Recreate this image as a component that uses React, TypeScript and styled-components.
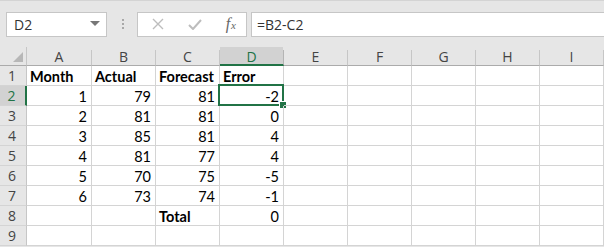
import React from 'react';
import styled, {createGlobalStyle} from 'styled-components';

const GREEN = '#217346';

const GlobalStyle = createGlobalStyle`
    html, body {
        margin: 0;
        padding: 0;
        background: #e6e6e6;
        width: 604px;
        height: 247px;
        overflow: hidden;
    }
`;

const columns = ['A', 'B', 'C', 'D', 'E', 'F', 'G', 'H', 'I'];

type Cell = {v: string; bold?: boolean; right?: boolean};

const data: Cell[][] = [
    [{v: 'Month', bold: true}, {v: 'Actual', bold: true}, {v: 'Forecast', bold: true}, {v: 'Error', bold: true}],
    [{v: '1', right: true}, {v: '79', right: true}, {v: '81', right: true}, {v: '-2', right: true}],
    [{v: '2', right: true}, {v: '81', right: true}, {v: '81', right: true}, {v: '0', right: true}],
    [{v: '3', right: true}, {v: '85', right: true}, {v: '81', right: true}, {v: '4', right: true}],
    [{v: '4', right: true}, {v: '81', right: true}, {v: '77', right: true}, {v: '4', right: true}],
    [{v: '5', right: true}, {v: '70', right: true}, {v: '75', right: true}, {v: '-5', right: true}],
    [{v: '6', right: true}, {v: '73', right: true}, {v: '74', right: true}, {v: '-1', right: true}],
    [{v: ''}, {v: ''}, {v: 'Total', bold: true}, {v: '0', right: true}],
    [],
];

const selCol = 3;
const selRow = 1;

export default function App() {
    return (
        <Page>
            <GlobalStyle />
            <Toolbar>
                <NameBox>
                    <span>D2</span>
                    <Caret />
                </NameBox>
                <Dots>
                    <i />
                    <i />
                    <i />
                </Dots>
                <FxBox>
                    <svg width='12' height='12' viewBox='0 0 12 12'>
                        <path d='M1 1L11 11M11 1L1 11' stroke='#bdbdbd' strokeWidth='1.4' fill='none' />
                    </svg>
                    <svg width='14' height='11' viewBox='0 0 14 11'>
                        <path d='M1 6L5 10L13 1' stroke='#bdbdbd' strokeWidth='2' fill='none' />
                    </svg>
                    <Fx>
                        f<sub>x</sub>
                    </Fx>
                </FxBox>
                <FormulaInput>=B2-C2</FormulaInput>
            </Toolbar>
            <Grid>
                <Corner>
                    <svg width='10' height='10' viewBox='0 0 10 10'>
                        <path d='M10 0L10 10L0 10Z' fill='#b7b7b7' />
                    </svg>
                </Corner>
                {columns.map((c, i) => (
                    <ColHead key={c} selected={i === selCol}>
                        {c}
                    </ColHead>
                ))}
                {Array.from({length: 9}).map((_, r) => (
                    <React.Fragment key={r}>
                        <RowHead selected={r === selRow}>{r + 1}</RowHead>
                        {columns.map((c, ci) => {
                            const cell = data[r][ci];
                            return (
                                <DataCell key={c} bold={cell?.bold} right={cell?.right}>
                                    {cell?.v}
                                    {r === selRow && ci === selCol && (
                                        <>
                                            <SelBox />
                                            <Handle />
                                        </>
                                    )}
                                </DataCell>
                            );
                        })}
                    </React.Fragment>
                ))}
            </Grid>
        </Page>
    );
}

const Page = styled.div`
    width: 604px;
    height: 247px;
    background: #e6e6e6;
    border-top: 1px solid #d4d4d4;
    box-sizing: border-box;
    font-family: 'Open Sans', 'Liberation Sans', sans-serif;
`;

const Toolbar = styled.div`
    display: flex;
    align-items: center;
    height: 46px;
    padding: 0 0 0 6px;
    box-sizing: border-box;
`;

const NameBox = styled.div`
    display: flex;
    align-items: center;
    justify-content: space-between;
    width: 101px;
    height: 25px;
    box-sizing: border-box;
    background: #fff;
    border: 1px solid #c6c6c6;
    padding: 0 6px 0 7px;
    font-size: 14px;
    color: #333;
`;

const Caret = styled.span`
    width: 0;
    height: 0;
    border-left: 5px solid transparent;
    border-right: 5px solid transparent;
    border-top: 5px solid #777;
    margin-top: -2px;
`;

const Dots = styled.div`
    display: flex;
    flex-direction: column;
    gap: 2px;
    margin: 0 13px 0 15px;

    i {
        display: block;
        width: 2px;
        height: 2px;
        background: #a8a8a8;
    }
`;

const FxBox = styled.div`
    display: flex;
    align-items: center;
    justify-content: space-between;
    width: 110px;
    height: 25px;
    box-sizing: border-box;
    background: #fff;
    border: 1px solid #c6c6c6;
    padding: 0 10px 0 14px;
`;

const Fx = styled.span`
    font-family: 'Liberation Serif', serif;
    font-style: italic;
    font-size: 16px;
    color: #666;
    line-height: 1;

    sub {
        font-size: 11px;
        vertical-align: 0;
        margin-left: 1px;
    }
`;

const FormulaInput = styled.div`
    flex: 1;
    margin-left: 4px;
    height: 25px;
    box-sizing: border-box;
    background: #fff;
    border: 1px solid #c6c6c6;
    border-right: none;
    display: flex;
    align-items: center;
    padding-left: 5px;
    font-size: 14px;
    color: #333;
`;

const Grid = styled.div`
    display: grid;
    grid-template-columns: 27px 65px repeat(8, 64px);
    grid-template-rows: 19px repeat(9, 20px);
    background: #fff;
`;

const Corner = styled.div`
    background: #e6e6e6;
    border-right: 1px solid #c6c6c6;
    border-bottom: 1px solid #ababab;
    display: flex;
    align-items: flex-end;
    justify-content: flex-end;
    padding: 0 3px 3px 0;
`;

const ColHead = styled.div<{selected?: boolean}>`
    background: ${({selected}) => (selected ? '#d2d2d2' : '#e6e6e6')};
    border-right: 1px solid ${({selected}) => (selected ? '#b4b4b4' : '#c6c6c6')};
    border-bottom: ${({selected}) => (selected ? `2px solid ${GREEN}` : '1px solid #ababab')};
    color: ${({selected}) => (selected ? GREEN : '#444')};
    font-size: 14px;
    display: flex;
    align-items: center;
    justify-content: center;
    padding-top: ${({selected}) => (selected ? '1px' : '0')};
    position: relative;

    &:after {
        content: '';
        position: absolute;
        right: -1px;
        top: 0;
        height: 3px;
        width: 1px;
        background: #e6e6e6;
    }
`;

const RowHead = styled.div<{selected?: boolean}>`
    background: ${({selected}) => (selected ? '#d2d2d2' : '#e6e6e6')};
    border-right: ${({selected}) => (selected ? `2px solid ${GREEN}` : '1px solid #c6c6c6')};
    border-bottom: 1px solid #d4d4d4;
    color: ${({selected}) => (selected ? GREEN : '#444')};
    font-size: 14px;
    display: flex;
    align-items: center;
    justify-content: center;
    padding-right: 2px;
`;

const DataCell = styled.div<{bold?: boolean; right?: boolean}>`
    position: relative;
    border-right: 1px solid #d4d4d4;
    border-bottom: 1px solid #d4d4d4;
    font-family: Lato, 'Liberation Sans', sans-serif;
    font-size: 14.5px;
    font-weight: ${({bold}) => (bold ? 700 : 400)};
    color: #000;
    display: flex;
    align-items: center;
    justify-content: ${({right}) => (right ? 'flex-end' : 'flex-start')};
    padding: 1px 4px 0 3px;
    white-space: nowrap;
`;

const SelBox = styled.div`
    position: absolute;
    left: -2px;
    top: -2px;
    right: -1px;
    bottom: -1px;
    border: 2px solid ${GREEN};
    pointer-events: none;
`;

const Handle = styled.div`
    position: absolute;
    right: -4px;
    bottom: -4px;
    width: 6px;
    height: 6px;
    background: ${GREEN};
    border: 1px solid #fff;
`;
